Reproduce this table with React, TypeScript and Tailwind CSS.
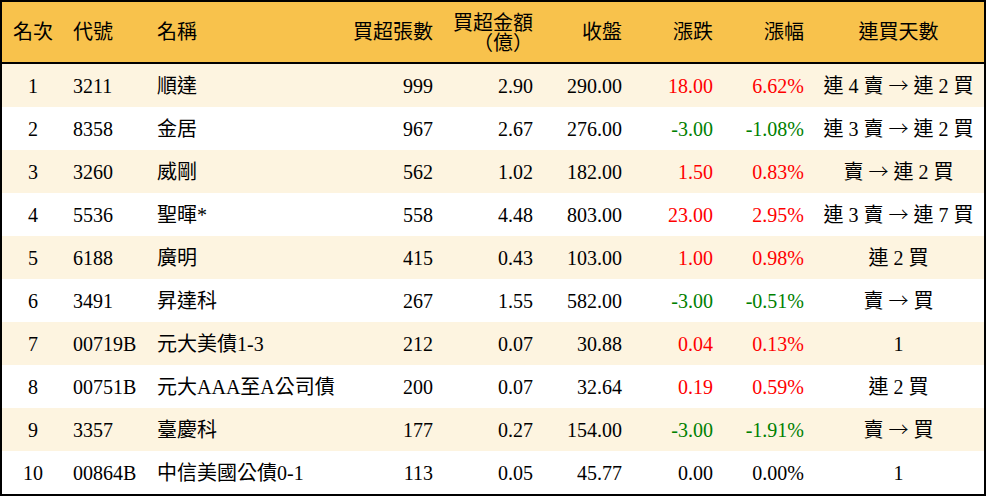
import React from 'react';

type Row = {
  rank: number;
  code: string;
  name: string;
  lots: number;
  amount: string;
  close: string;
  change: string;
  pct: string;
  streak: string;
};

const rows: Row[] = [
  { rank: 1, code: '3211', name: '順達', lots: 999, amount: '2.90', close: '290.00', change: '18.00', pct: '6.62%', streak: '連 4 賣 → 連 2 買' },
  { rank: 2, code: '8358', name: '金居', lots: 967, amount: '2.67', close: '276.00', change: '-3.00', pct: '-1.08%', streak: '連 3 賣 → 連 2 買' },
  { rank: 3, code: '3260', name: '威剛', lots: 562, amount: '1.02', close: '182.00', change: '1.50', pct: '0.83%', streak: '賣 → 連 2 買' },
  { rank: 4, code: '5536', name: '聖暉*', lots: 558, amount: '4.48', close: '803.00', change: '23.00', pct: '2.95%', streak: '連 3 賣 → 連 7 買' },
  { rank: 5, code: '6188', name: '廣明', lots: 415, amount: '0.43', close: '103.00', change: '1.00', pct: '0.98%', streak: '連 2 買' },
  { rank: 6, code: '3491', name: '昇達科', lots: 267, amount: '1.55', close: '582.00', change: '-3.00', pct: '-0.51%', streak: '賣 → 買' },
  { rank: 7, code: '00719B', name: '元大美債1-3', lots: 212, amount: '0.07', close: '30.88', change: '0.04', pct: '0.13%', streak: '1' },
  { rank: 8, code: '00751B', name: '元大AAA至A公司債', lots: 200, amount: '0.07', close: '32.64', change: '0.19', pct: '0.59%', streak: '連 2 買' },
  { rank: 9, code: '3357', name: '臺慶科', lots: 177, amount: '0.27', close: '154.00', change: '-3.00', pct: '-1.91%', streak: '賣 → 買' },
  { rank: 10, code: '00864B', name: '中信美國公債0-1', lots: 113, amount: '0.05', close: '45.77', change: '0.00', pct: '0.00%', streak: '1' },
];

// fixed column template shared by header and rows
const cols = 'grid grid-cols-[62px_84px_192px_102px_100px_89px_91px_91px_171px]';

function tone(v: string) {
  const n = parseFloat(v);
  if (n > 0) return 'text-[#ff0000]';
  if (n < 0) return 'text-[#008000]';
  return 'text-black';
}

// arrow drawn with the CJK font so it comes out full width like the original
function Streak({ text }: { text: string }) {
  const parts = text.split('→');
  return (
    <>
      {parts.map((p, i) => (
        <React.Fragment key={i}>
          {i > 0 && <span className="font-['Noto_Sans_CJK_TC'] font-light">→</span>}
          {p}
        </React.Fragment>
      ))}
    </>
  );
}

export default function App() {
  return (
    <div
      className="w-[986px] h-[496px] border-2 border-black bg-white text-[20px] text-black overflow-hidden"
      style={{ fontFamily: '"Liberation Serif", "Noto Sans CJK TC", serif' }}
    >
      {/* Header */}
      <div className={`${cols} h-[62px] items-center bg-[#f8c24c] border-b-2 border-black leading-[20px]`}>
        <div className="text-center">名次</div>
        <div className="pl-[9px]">代號</div>
        <div className="pl-[9px]">名稱</div>
        <div className="text-right pr-[9px]">買超張數</div>
        <div className="text-right pr-[9px] pt-[2px]">
          <div>買超金額</div>
          <div>（億）</div>
        </div>
        <div className="text-right pr-[9px]">收盤</div>
        <div className="text-right pr-[9px]">漲跌</div>
        <div className="text-right pr-[9px]">漲幅</div>
        <div className="text-center">連買天數</div>
      </div>

      {/* Rows */}
      {rows.map((r, i) => (
        <div
          key={r.rank}
          className={`${cols} h-[43px] items-center whitespace-nowrap ${i % 2 === 0 ? 'bg-[#fdf4e0]' : 'bg-white'}`}
        >
          <div className="text-center">{r.rank}</div>
          <div className="pl-[9px]">{r.code}</div>
          <div className="pl-[9px]">{r.name}</div>
          <div className="text-right pr-[9px]">{r.lots}</div>
          <div className="text-right pr-[9px]">{r.amount}</div>
          <div className="text-right pr-[9px]">{r.close}</div>
          <div className={`text-right pr-[9px] ${tone(r.change)}`}>{r.change}</div>
          <div className={`text-right pr-[9px] ${tone(r.pct)}`}>{r.pct}</div>
          <div className="text-center">
            <Streak text={r.streak} />
          </div>
        </div>
      ))}
    </div>
  );
}
